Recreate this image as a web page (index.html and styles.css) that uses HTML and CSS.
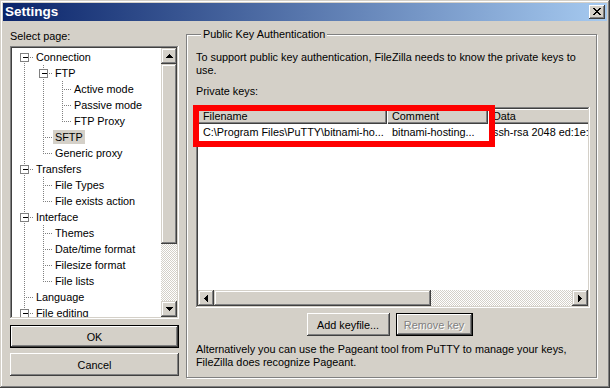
FILE: index.html
```html
<!DOCTYPE html>
<html>
<head>
<meta charset="utf-8">
<title>Settings</title>
<link rel="stylesheet" href="styles.css">
</head>
<body>
<div class="window">
  <div class="titlebar">
    <span class="title">Settings</span>
    <span class="cap-btn">
      <svg width="8" height="7" viewBox="0 0 8 7" shape-rendering="crispEdges"><g fill="#000"><rect x="0" y="0" width="2" height="1"/><rect x="6" y="0" width="2" height="1"/><rect x="1" y="1" width="2" height="1"/><rect x="5" y="1" width="2" height="1"/><rect x="2" y="2" width="4" height="1"/><rect x="3" y="3" width="2" height="1"/><rect x="2" y="4" width="4" height="1"/><rect x="1" y="5" width="2" height="1"/><rect x="5" y="5" width="2" height="1"/><rect x="0" y="6" width="2" height="1"/><rect x="6" y="6" width="2" height="1"/></g></svg>
    </span>
  </div>
  <div class="main">
    <div class="left">
      <div class="label">Select page:</div>
      <div class="tree sunken">
        <div class="tree-items">
          <div class="row"><span class="ind bx first"><i class="exp"></i></span><span class="txt">Connection</span></div>
          <div class="row"><span class="ind v"></span><span class="ind bx"><i class="exp"></i></span><span class="txt">FTP</span></div>
          <div class="row"><span class="ind v"></span><span class="ind v"></span><span class="ind t"></span><span class="txt">Active mode</span></div>
          <div class="row"><span class="ind v"></span><span class="ind v"></span><span class="ind t"></span><span class="txt">Passive mode</span></div>
          <div class="row"><span class="ind v"></span><span class="ind v"></span><span class="ind l"></span><span class="txt">FTP Proxy</span></div>
          <div class="row"><span class="ind v"></span><span class="ind t"></span><span class="txt sel">SFTP</span></div>
          <div class="row"><span class="ind v"></span><span class="ind l"></span><span class="txt">Generic proxy</span></div>
          <div class="row"><span class="ind bx"><i class="exp"></i></span><span class="txt">Transfers</span></div>
          <div class="row"><span class="ind v"></span><span class="ind t"></span><span class="txt">File Types</span></div>
          <div class="row"><span class="ind v"></span><span class="ind l"></span><span class="txt">File exists action</span></div>
          <div class="row"><span class="ind bx"><i class="exp"></i></span><span class="txt">Interface</span></div>
          <div class="row"><span class="ind v"></span><span class="ind t"></span><span class="txt">Themes</span></div>
          <div class="row"><span class="ind v"></span><span class="ind t"></span><span class="txt">Date/time format</span></div>
          <div class="row"><span class="ind v"></span><span class="ind t"></span><span class="txt">Filesize format</span></div>
          <div class="row"><span class="ind v"></span><span class="ind l"></span><span class="txt">File lists</span></div>
          <div class="row"><span class="ind t"></span><span class="txt">Language</span></div>
          <div class="row"><span class="ind bx"><i class="exp"></i></span><span class="txt">File editing</span></div>
        </div>
        <div class="vscroll">
          <span class="sbtn"><svg width="7" height="4" viewBox="0 0 7 4" shape-rendering="crispEdges"><path d="M3 0h1v1h1v1h1v1h1v1H0V3h1V2h1V1h1z"/></svg></span>
          <span class="thumb v-thumb"></span>
          <span class="track"></span>
          <span class="sbtn"><svg width="7" height="4" viewBox="0 0 7 4" shape-rendering="crispEdges"><path d="M0 0h7v1H6v1H5v1H4v1H3V3H2V2H1V1H0z"/></svg></span>
        </div>
      </div>
      <button class="btn default wide ok">OK</button>
      <button class="btn wide cancel">Cancel</button>
    </div>

    <fieldset class="group">
      <legend>Public Key Authentication</legend>
      <p class="desc">To support public key authentication, FileZilla needs to know the private keys to<br>use.</p>
      <div class="label keys">Private keys:</div>
      <div class="list sunken">
        <div class="list-view">
          <div class="list-header">
            <span class="hcell c1">Filename</span>
            <span class="hcell c2">Comment</span>
            <span class="hcell c3">Data</span>
          </div>
          <div class="list-row">
            <span class="cell c1">C:\Program Files\PuTTY\bitnami-ho...</span>
            <span class="cell c2">bitnami-hosting...</span>
            <span class="cell c3">ssh-rsa 2048 ed:1e:7b:2c:44:90:af</span>
          </div>
        </div>
        <div class="hscroll">
          <span class="sbtn"><svg width="4" height="7" viewBox="0 0 4 7" shape-rendering="crispEdges"><path d="M3 0h1v7H3V6H2V5H1V4H0V3h1V2h1V1h1z"/></svg></span>
          <span class="thumb h-thumb"></span>
          <span class="track"></span>
          <span class="sbtn"><svg width="4" height="7" viewBox="0 0 4 7" shape-rendering="crispEdges"><path d="M0 0h1v1h1v1h1v1h1v1H3v1H2v1H1v1H0z"/></svg></span>
        </div>
      </div>
      <div class="btn-row">
        <button class="btn add">Add keyfile...</button>
        <button class="btn default disabled remove">Remove key</button>
      </div>
      <p class="desc bottom">Alternatively you can use the Pageant tool from PuTTY to manage your keys,<br>FileZilla does recognize Pageant.</p>
    </fieldset>
  </div>
  <div class="annotation"></div>
</div>
</body>
</html>
```

FILE: styles.css
```css
* { box-sizing: border-box; }
html, body { margin: 0; padding: 0; }
body {
  font-family: "Liberation Sans", Arial, sans-serif;
  font-size: 10.85px;
  color: #000;
  background: #D4D0C8;
}

.window {
  position: relative;
  width: 610px;
  height: 388px;
  padding: 3px;
  background: #D4D0C8;
  box-shadow: inset -1px -1px #404040, inset 1px 1px #D4D0C8, inset -2px -2px #808080, inset 2px 2px #fff;
  display: flex;
  flex-direction: column;
  overflow: hidden;
}

.titlebar {
  height: 18px;
  flex: none;
  display: flex;
  align-items: center;
  justify-content: space-between;
  padding: 0 2px;
  background: linear-gradient(to right, #0A246A, #A6CAF0);
}
.title {
  color: #fff;
  font-weight: bold;
  font-size: 13.5px;
  line-height: 18px;
}
.cap-btn {
  width: 16px;
  height: 14px;
  background: #D4D0C8;
  box-shadow: inset -1px -1px #404040, inset 1px 1px #fff, inset -2px -2px #808080, inset 2px 2px #D4D0C8;
  display: flex;
  justify-content: center;
  align-items: flex-start;
  padding-top: 3px;
}
.cap-btn svg { display: block; }

.main {
  flex: 1;
  display: flex;
  gap: 7px;
  padding-left: 7px;
}

.left {
  width: 169px;
  flex: none;
  display: flex;
  flex-direction: column;
  padding-top: 9px;
}
.label { line-height: 13px; height: 13px; white-space: nowrap; }

.sunken {
  padding: 2px;
  box-shadow: inset -1px -1px #fff, inset 1px 1px #808080, inset -2px -2px #D4D0C8, inset 2px 2px #404040;
  background: #fff;
}

.tree {
  margin-top: 3px;
  height: 273px;
  display: flex;
}
.tree-items {
  flex: 1;
  min-width: 0;
  overflow: hidden;
  padding: 1px 0 0 3px;
}
.row {
  display: flex;
  height: 16px;
  white-space: nowrap;
}
.ind {
  width: 19px;
  height: 16px;
  flex: none;
  display: flex;
  justify-content: center;
  align-items: flex-start;
  background-repeat: no-repeat;
}
.v {
  background-image: repeating-linear-gradient(to bottom, #808080 0 1px, transparent 1px 2px);
  background-size: 1px 16px;
  background-position: 9px 0;
}
.t, .l, .bx {
  background-image: repeating-linear-gradient(to bottom, #808080 0 1px, transparent 1px 2px),
                    repeating-linear-gradient(to right, #808080 0 1px, transparent 1px 2px);
  background-size: 1px 16px, 10px 1px;
  background-position: 9px 0, 9px 8px;
}
.l { background-size: 1px 9px, 10px 1px; }
.bx.first { background-size: 1px 8px, 10px 1px; background-position: 9px 8px, 9px 8px; }
.exp {
  display: block;
  width: 9px;
  height: 9px;
  margin-top: 4px;
  border: 1px solid #808080;
  background: linear-gradient(#000, #000) 2px 3px / 5px 1px no-repeat, #fff;
}
.txt {
  margin-top: 1px;
  height: 14px;
  line-height: 14px;
  padding: 0 2px;
}
.txt.sel { background: #D4D0C8; }

.vscroll {
  width: 16px;
  flex: none;
  display: flex;
  flex-direction: column;
}
.sbtn {
  flex: none;
  width: 16px;
  height: 16px;
  background: #D4D0C8;
  box-shadow: inset -1px -1px #404040, inset 1px 1px #D4D0C8, inset -2px -2px #808080, inset 2px 2px #fff;
  display: flex;
  align-items: center;
  justify-content: center;
}
.sbtn svg { display: block; }
.thumb {
  flex: none;
  background: #D4D0C8;
  box-shadow: inset -1px -1px #404040, inset 1px 1px #D4D0C8, inset -2px -2px #808080, inset 2px 2px #fff;
}
.v-thumb { height: 180px; }
.track {
  flex: 1;
  background: repeating-conic-gradient(#D4D0C8 0 25%, #fff 0 50%) 0 0 / 2px 2px;
}

.btn {
  font: inherit;
  color: #000;
  background: #D4D0C8;
  border: 0;
  padding: 0;
  height: 23px;
  box-shadow: inset -1px -1px #404040, inset 1px 1px #fff, inset -2px -2px #808080, inset 2px 2px #D4D0C8;
}
.btn.default {
  border: 1px solid #000;
}
.btn.wide { width: 169px; }
.ok { margin-top: 6px; }
.cancel { margin-top: 5px; }
.btn.disabled {
  color: #808080;
  text-shadow: 1px 1px #fff;
}

.group {
  margin: 7px 0 0 0;
  padding: 10px 6px 8px 9px;
  width: 411px;
  min-width: 0;
  align-self: flex-start;
  border: 1px solid #808080;
  box-shadow: inset 1px 1px #fff, 1px 1px #fff;
}
.group legend {
  padding: 0 2px;
  margin-left: 5px;
  line-height: 13px;
  background: #D4D0C8;
}
.desc {
  margin: 0;
  line-height: 13px;
  white-space: nowrap;
}
.keys { margin-top: 8px; }

.list {
  margin-top: 9px;
  width: 394px;
  height: 201px;
  display: flex;
  flex-direction: column;
}
.list-view {
  flex: 1;
  overflow: hidden;
  background: #fff;
}
.list-header, .list-row {
  display: flex;
  white-space: nowrap;
}
.list-header { height: 15px; }
.list-row { height: 16px; }
.hcell, .cell {
  flex: none;
  overflow: hidden;
  padding-left: 5px;
}
.hcell {
  line-height: 15px;
  background: #D4D0C8;
  box-shadow: inset 1px 1px #fff, inset -1px -1px #404040, inset -2px -2px #808080;
}
.cell { line-height: 16px; }
.c1 { width: 189px; }
.c2 { width: 101px; }
.c3 { width: 200px; }

.hscroll {
  height: 16px;
  flex: none;
  display: flex;
}
.h-thumb { width: 217px; }

.btn-row {
  margin-top: 5px;
  display: flex;
  justify-content: center;
  gap: 6px;
  padding-right: 7px;
}
.add { width: 83px; }
.remove { width: 77px; }
.desc.bottom { margin-top: 7px; }

.annotation {
  position: absolute;
  left: 193px;
  top: 105px;
  width: 302px;
  height: 42px;
  border: 6px solid #f00;
}
```
